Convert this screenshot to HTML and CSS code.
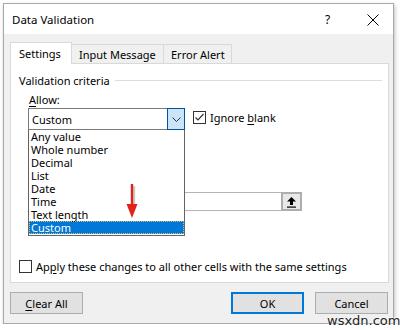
FILE: index.html
```html
<!DOCTYPE html>
<html>
<head>
<meta charset="utf-8">
<link rel="stylesheet" href="styles.css">
</head>
<body>
<div class="window">
  <div class="titlebar">
    <span class="title">Data Validation</span>
    <span class="help">?</span>
    <svg class="close" width="12" height="12" viewBox="0 0 12 12"><path d="M0.5 0.5 L11.5 11.5 M11.5 0.5 L0.5 11.5" stroke="#000" stroke-width="1" fill="none"/></svg>
  </div>
  <div class="body">
    <div class="tabs">
      <div class="tab active">Settings</div>
      <div class="tab">Input Message</div>
      <div class="tab">Error Alert</div>
    </div>
    <div class="panel">
      <div class="group-head"><span>Validation criteria</span><span class="rule"></span></div>
      <div class="allow-label"><u>A</u>llow:</div>
      <div class="allow-row">
        <div class="combo-wrap">
          <div class="combo">
            <span class="combo-text">Custom</span>
            <span class="combo-btn"><svg width="9" height="5" viewBox="0 0 9 5"><path d="M0.5 0.5 L4.5 4.5 L8.5 0.5" stroke="#333" stroke-width="1" fill="none"/></svg></span>
          </div>
          <ul class="list">
            <li>Any value</li>
            <li>Whole number</li>
            <li>Decimal</li>
            <li>List</li>
            <li>Date</li>
            <li>Time</li>
            <li>Text length</li>
            <li class="sel">Custom</li>
          </ul>
        </div>
        <label class="check">
          <span class="box"><svg width="11" height="11" viewBox="0 0 11 11"><path d="M1.5 5.5 L4 8 L9.5 2" stroke="#333" stroke-width="1.2" fill="none"/></svg></span>
          <span>Ignore <u>b</u>lank</span>
        </label>
      </div>
      <div class="formula-row">
        <div class="formula-input"></div>
        <div class="ref-btn"><svg width="11" height="12" viewBox="0 0 11 12"><path d="M5.5 1 L10 5.5 L7 5.5 L7 9 L4 9 L4 5.5 L1 5.5 Z" fill="#000"/><rect x="1" y="10.5" width="9" height="1.2" fill="#000"/></svg></div>
      </div>
      <svg class="arrow" width="16" height="40" viewBox="0 0 16 40">
        <path d="M9 3 L9 26" stroke="#9a9a9a" stroke-width="2.4" opacity="0.5"/>
        <path d="M7 1 L7 24" stroke="#e2231a" stroke-width="2.4"/>
        <path d="M1.5 21 L12.5 21 L7 35 Z" fill="#e2231a"/>
      </svg>
      <label class="check apply">
        <span class="box"></span>
        <span>Ap<u>p</u>ly these changes to all other cells with the same settings</span>
      </label>
    </div>
    <div class="buttons">
      <button class="btn"><u>C</u>lear All</button>
      <span class="spacer"></span>
      <button class="btn default">OK</button>
      <button class="btn">Cancel</button>
    </div>
  </div>
</div>
<div class="watermark">wsxdn.com</div>
</body>
</html>
```
FILE: styles.css
```css
html, body {
  margin: 0;
  padding: 0;
  background: #fff;
  font-family: "Noto Sans", "Open Sans", sans-serif;
  font-size: 11px;
  color: #000;
}
.window {
  position: relative;
  margin: 3px 0 0 3px;
  width: 389px;
  height: 319px;
  border: 1px solid #a8a8a8;
  background: #f0f0f0;
  box-shadow: 1px 2px 4px rgba(0,0,0,0.25);
}
.titlebar {
  height: 30px;
  background: #fff;
  display: flex;
  align-items: center;
  padding-left: 8px;
}
.title {
  flex: 1;
  font-size: 11.5px;
  line-height: 16px;
  margin-top: 2px;
}
.help {
  width: 10px;
  margin-right: 32px;
  font-size: 12px;
  margin-top: 1px;
}
.close {
  margin-right: 14px;
  margin-top: 1px;
}
.body {
  padding: 8px 0 0 6px;
}
.tabs {
  display: flex;
  align-items: flex-end;
  height: 21px;
  position: relative;
  z-index: 1;
}
.tab {
  box-sizing: border-box;
  white-space: nowrap;
  height: 19px;
  line-height: 19px;
  border: 1px solid #d9d9d9;
  border-bottom: none;
  padding: 0 0 0 7px;
  background: #f0f0f0;
  margin-left: -1px;
}
.tab.active {
  height: 22px;
  line-height: 22px;
  margin-bottom: -1px;
  background: #fff;
  margin-left: 0;
  padding-left: 8px;
  width: 62px;
}
.tab:nth-child(2) { width: 93px; }
.tab:nth-child(3) { width: 69px; }
.panel {
  position: relative;
  background: #fff;
  border: 1px solid #d9d9d9;
  box-sizing: border-box;
  width: 379px;
  height: 220px;
  padding: 8px 0 0 8px;
}
.group-head {
  display: flex;
  align-items: center;
  height: 16px;
  white-space: nowrap;
}
.rule {
  flex: 1;
  height: 1px;
  background: #dcdcdc;
  margin: 0 6px 0 5px;
}
.allow-label {
  margin: 4px 0 0 10px;
  height: 16px;
  line-height: 16px;
}
.allow-label u, .check u, .btn u { text-decoration-thickness: 1px; text-underline-offset: 2px; }
.allow-row {
  display: flex;
  align-items: flex-start;
  margin-left: 9px;
  height: 22px;
}
.combo-wrap {
  position: relative;
  width: 157px;
}
.combo {
  box-sizing: border-box;
  height: 22px;
  border: 1px solid #7a7a7a;
  display: flex;
  align-items: center;
  background: #fff;
}
.combo-text {
  flex: 1;
  padding-left: 3px;
}
.combo-btn {
  box-sizing: border-box;
  width: 18px;
  height: 22px;
  margin: -1px -1px -1px 0;
  background: #cce4f7;
  border: 1px solid #005499;
  display: flex;
  align-items: center;
  justify-content: center;
}
.list {
  position: absolute;
  z-index: 5;
  left: 0;
  top: 22px;
  width: 157px;
  box-sizing: border-box;
  margin: 0;
  padding: 0 0 1px 0;
  list-style: none;
  background: #fff;
  border: 1px solid #646464;
  border-top: none;
}
.list li {
  height: 13px;
  line-height: 13px;
  padding-left: 2px;
}
.list li.sel {
  background: #0078d7;
  color: #fff;
  outline: 1px dotted #d8c070;
  outline-offset: -1px;
}
.check {
  display: flex;
  align-items: center;
  margin-left: 8px;
  margin-top: 1px;
  height: 16px;
  white-space: nowrap;
}
.box {
  box-sizing: border-box;
  width: 13px;
  height: 13px;
  border: 1px solid #333;
  background: #fff;
  display: flex;
  align-items: center;
  justify-content: center;
  margin-right: 4px;
}
.formula-row {
  display: flex;
  margin: 62px 0 0 9px;
}
.formula-input {
  box-sizing: border-box;
  width: 253px;
  height: 19px;
  border: 1px solid #b4b4b4;
  border-right: none;
  background: #fff;
}
.ref-btn {
  box-sizing: border-box;
  width: 21px;
  height: 19px;
  border: 2px solid #adadad;
  background: #e8e8e8;
  display: flex;
  align-items: center;
  justify-content: center;
}
.arrow {
  position: absolute;
  left: 114px;
  top: 119px;
  z-index: 6;
}
.check.apply {
  margin: 47px 0 0 0;
}
.buttons {
  display: flex;
  margin-top: 9px;
  width: 378px;
}
.spacer { flex: 1; }
.btn {
  box-sizing: border-box;
  width: 73px;
  height: 22px;
  background: #e1e1e1;
  border: 1px solid #adadad;
  font-family: inherit;
  font-size: 11px;
  color: #000;
  padding: 0;
  margin-left: 11px;
}
.btn:first-child { margin-left: 0; }
.btn.default {
  border: 2px solid #0078d7;
}
.watermark {
  position: absolute;
  left: 327px;
  top: 313px;
  font-family: "DejaVu Sans", sans-serif;
  font-size: 13px;
  color: #222;
  text-shadow: 0 0 2px #fff, 0 0 2px #fff;
}
```
